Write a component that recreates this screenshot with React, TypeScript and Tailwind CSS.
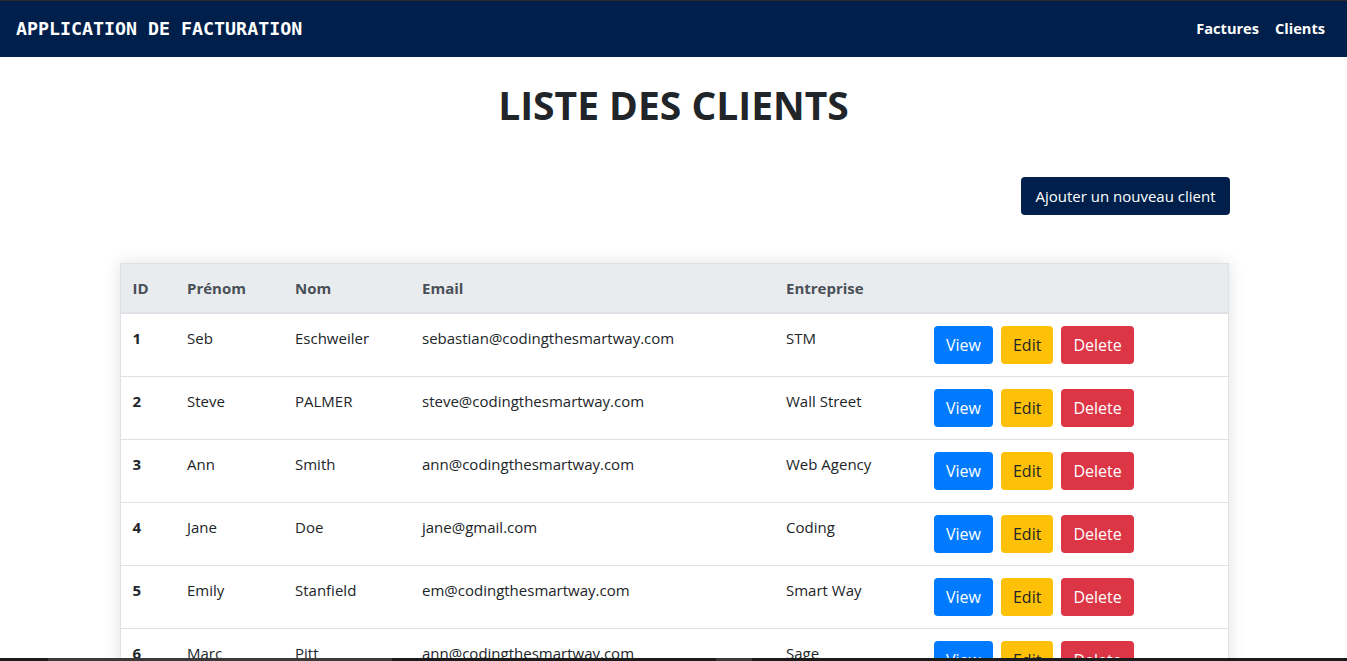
const clients = [
  { id: 1, prenom: "Seb", nom: "Eschweiler", email: "sebastian@codingthesmartway.com", entreprise: "STM" },
  { id: 2, prenom: "Steve", nom: "PALMER", email: "steve@codingthesmartway.com", entreprise: "Wall Street" },
  { id: 3, prenom: "Ann", nom: "Smith", email: "ann@codingthesmartway.com", entreprise: "Web Agency" },
  { id: 4, prenom: "Jane", nom: "Doe", email: "jane@gmail.com", entreprise: "Coding" },
  { id: 5, prenom: "Emily", nom: "Stanfield", email: "em@codingthesmartway.com", entreprise: "Smart Way" },
  { id: 6, prenom: "Marc", nom: "Pitt", email: "ann@codingthesmartway.com", entreprise: "Sage" },
];

export default function App() {
  return (
    <div className="min-h-screen bg-white text-[#212529] font-['Open_Sans',sans-serif] text-[15px]">
      {/* Navbar */}
      <nav className="flex h-[57px] items-center justify-between border-t border-[#2b2b2b] bg-[#001f4b] px-4">
        <span className="font-['DejaVu_Sans_Mono',monospace] text-[18.3px] font-bold text-white">
          APPLICATION DE FACTURATION
        </span>
        <div className="flex gap-4 pr-[6px] text-[14.6px] font-bold text-white">
          <a>Factures</a>
          <a>Clients</a>
        </div>
      </nav>

      <div className="mx-auto w-[1110px]">
        <h1 className="mt-[24px] text-center text-[39px] font-bold leading-[48px]">LISTE DES CLIENTS</h1>

        <div className="mt-[48px] flex justify-end">
          <button className="mr-[-1px] h-[38px] rounded bg-[#001f4b] px-[14px] text-[15px] text-white">
            Ajouter un nouveau client
          </button>
        </div>

        <div className="mt-[48px] ml-[1px] shadow-[0_0_16px_rgba(0,0,0,0.12)]">
          <table className="w-full table-fixed border-collapse border border-[#dee2e6]">
            <colgroup>
              <col className="w-[55px]" />
              <col className="w-[108px]" />
              <col className="w-[127px]" />
              <col className="w-[364px]" />
              <col className="w-[148px]" />
              <col />
            </colgroup>
            <thead>
              <tr className="bg-[#e9ecef] text-left text-[#495057]">
                <th className="h-[49px] border-b-2 border-[#dee2e6] px-3 font-bold">ID</th>
                <th className="border-b-2 border-[#dee2e6] px-3 font-bold">Prénom</th>
                <th className="border-b-2 border-[#dee2e6] px-3 font-bold">Nom</th>
                <th className="border-b-2 border-[#dee2e6] px-3 font-bold">Email</th>
                <th className="border-b-2 border-[#dee2e6] px-3 font-bold">Entreprise</th>
                <th className="border-b-2 border-[#dee2e6] px-3"></th>
              </tr>
            </thead>
            <tbody>
              {clients.map((c) => (
                <tr key={c.id} className="border-t border-[#dee2e6] align-top">
                  <td className="px-3 py-3 font-bold leading-6">{c.id}</td>
                  <td className="px-3 py-3 leading-6">{c.prenom}</td>
                  <td className="px-3 py-3 leading-6">{c.nom}</td>
                  <td className="px-3 py-3 leading-6">{c.email}</td>
                  <td className="px-3 py-3 leading-6">{c.entreprise}</td>
                  <td className="px-3 py-3">
                    <div className="flex gap-2 text-base">
                      <button className="h-[38px] rounded bg-[#007bff] px-3 text-white">View</button>
                      <button className="h-[38px] rounded bg-[#ffc107] px-3 text-[#212529]">Edit</button>
                      <button className="h-[38px] rounded bg-[#dc3545] px-3 text-white">Delete</button>
                    </div>
                  </td>
                </tr>
              ))}
            </tbody>
          </table>
        </div>
      </div>

      {/* bottom scrollbar strip */}
      <div className="fixed bottom-0 left-0 flex h-[3px] w-full bg-[#1b1b1b]">
        <div className="ml-[48px] w-[344px] bg-[#3a3a3a]" />
        <div className="ml-[324px] w-[36px] bg-[#3a3a3a]" />
      </div>
    </div>
  );
}
